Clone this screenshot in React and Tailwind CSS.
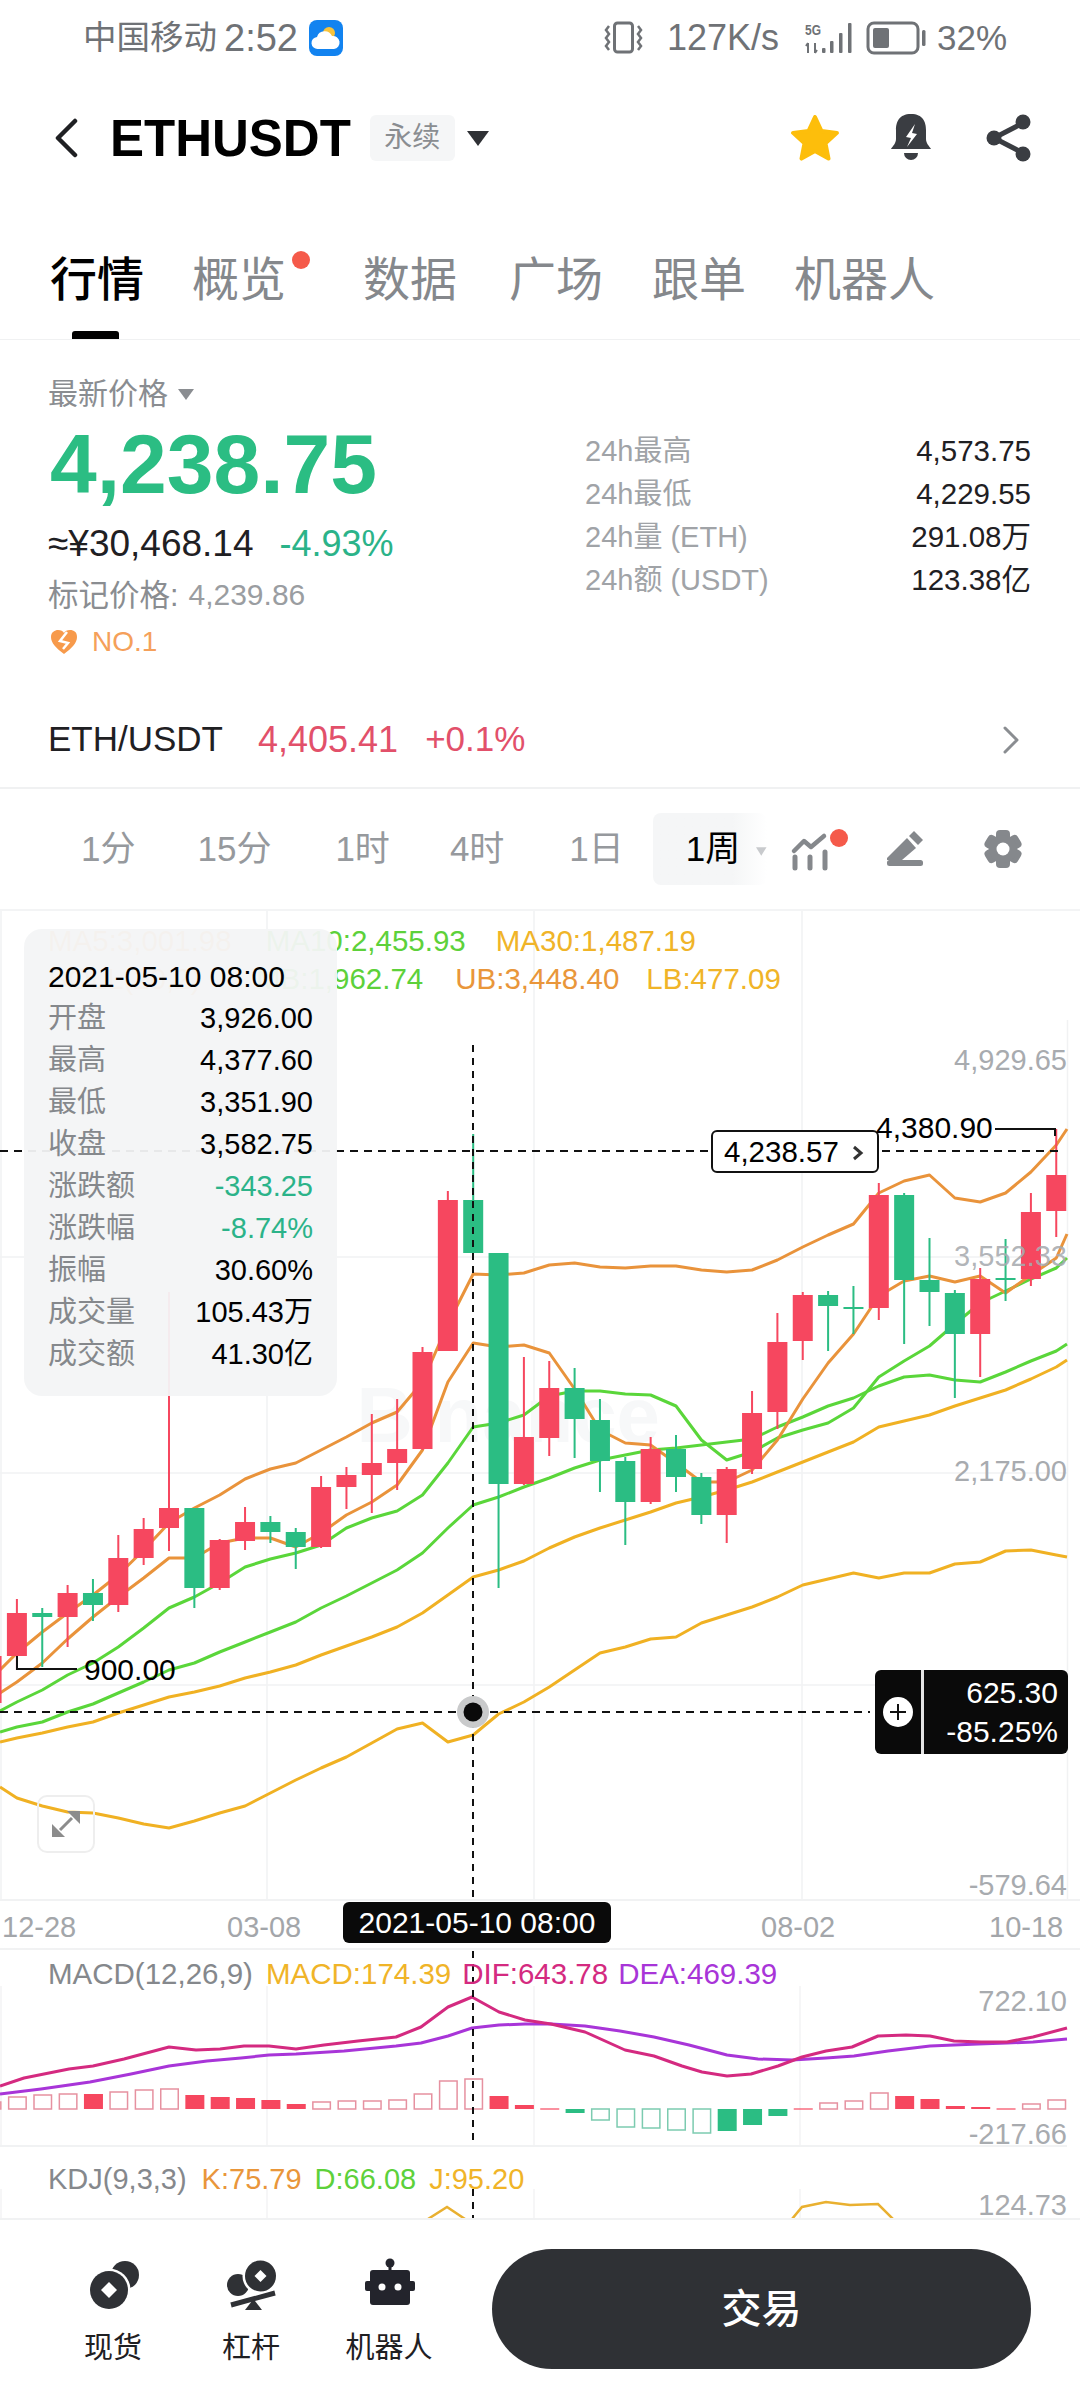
import React from 'react';

const RED = '#f6475f';
const GREEN = '#2bbd83';

// candle: [slot, colour, wick top, body top, body bottom, wick bottom]
const candles = [
  [-1, 'r', 1656, 1656, 1703, 1703],
  [0, 'r', 1599, 1613, 1656, 1670],
  [1, 'g', 1608, 1613, 1617, 1667],
  [2, 'r', 1585, 1593, 1617, 1647],
  [3, 'g', 1579, 1593, 1605, 1621],
  [4, 'r', 1535, 1558, 1605, 1612],
  [5, 'r', 1518, 1529, 1558, 1565],
  [6, 'r', 1292, 1508, 1528, 1551],
  [7, 'g', 1508, 1508, 1588, 1608],
  [8, 'r', 1539, 1540, 1588, 1590],
  [9, 'r', 1507, 1522, 1541, 1550],
  [10, 'g', 1516, 1522, 1532, 1543],
  [11, 'g', 1528, 1532, 1547, 1569],
  [12, 'r', 1476, 1487, 1547, 1548],
  [13, 'r', 1467, 1475, 1487, 1509],
  [14, 'r', 1414, 1463, 1475, 1513],
  [15, 'r', 1399, 1449, 1463, 1490],
  [16, 'r', 1347, 1352, 1449, 1450],
  [17, 'r', 1191, 1200, 1351, 1351],
  [18, 'g', 1134, 1200, 1253, 1253],
  [19, 'g', 1253, 1253, 1484, 1588],
  [20, 'r', 1357, 1437, 1484, 1485],
  [21, 'r', 1361, 1388, 1438, 1456],
  [22, 'g', 1368, 1388, 1419, 1458],
  [23, 'g', 1399, 1420, 1461, 1492],
  [24, 'g', 1457, 1461, 1502, 1545],
  [25, 'r', 1437, 1449, 1502, 1504],
  [26, 'g', 1435, 1449, 1477, 1492],
  [27, 'g', 1473, 1477, 1515, 1524],
  [28, 'r', 1467, 1469, 1515, 1543],
  [29, 'r', 1391, 1413, 1469, 1474],
  [30, 'r', 1313, 1342, 1412, 1429],
  [31, 'r', 1292, 1295, 1341, 1360],
  [32, 'g', 1291, 1295, 1306, 1351],
  [33, 'g', 1286, 1307, 1309, 1334],
  [34, 'r', 1183, 1195, 1308, 1320],
  [35, 'g', 1193, 1195, 1280, 1344],
  [36, 'g', 1238, 1280, 1292, 1326],
  [37, 'g', 1290, 1293, 1334, 1398],
  [38, 'r', 1268, 1279, 1334, 1377],
  [39, 'g', 1239, 1278, 1280, 1301],
  [40, 'r', 1193, 1212, 1279, 1286],
  [41, 'r', 1129, 1175, 1211, 1237],
];

// y per slot, with one extra value at each chart edge
const overlays = [
  { color: '#f0b123', ys: [1787,1798,1806,1812,1813,1818,1824,1828,1821,1813,1806,1793,1780,1768,1757,1743,1729,1723,1742,1735,1714,1702,1687,1670,1653,1647,1639,1637,1623,1615,1607,1597,1585,1579,1573,1578,1573,1573,1564,1562,1551,1550,1555,1557] },
  { color: '#f0b123', ys: [1742,1738,1733,1727,1722,1713,1705,1697,1692,1686,1678,1672,1665,1655,1646,1637,1627,1613,1595,1577,1570,1561,1548,1537,1528,1520,1512,1503,1497,1490,1482,1472,1462,1452,1442,1427,1421,1415,1406,1398,1390,1379,1367,1360] },
  { color: '#5ad63a', ys: [1732,1727,1722,1712,1704,1693,1682,1670,1663,1652,1642,1632,1622,1608,1596,1583,1570,1553,1528,1505,1497,1487,1478,1468,1460,1455,1450,1448,1445,1442,1439,1427,1417,1406,1398,1386,1377,1375,1380,1382,1372,1361,1351,1344] },
  { color: '#5ad63a', ys: [1711,1702,1690,1675,1663,1647,1628,1608,1597,1583,1567,1559,1553,1545,1528,1518,1511,1495,1463,1427,1423,1415,1396,1391,1391,1394,1395,1406,1440,1460,1452,1438,1430,1423,1408,1377,1361,1346,1324,1303,1291,1279,1268,1258] },
  { color: '#e9933b', ys: [1693,1682,1663,1639,1617,1597,1578,1558,1558,1543,1538,1538,1547,1533,1515,1502,1485,1450,1382,1343,1347,1345,1353,1389,1430,1443,1445,1463,1482,1482,1470,1440,1399,1363,1334,1296,1281,1276,1282,1276,1293,1275,1258,1234] },
  { color: '#e9933b', ys: [1670,1653,1632,1613,1595,1575,1550,1523,1508,1495,1479,1469,1463,1450,1437,1423,1412,1382,1324,1274,1275,1273,1265,1263,1267,1268,1266,1266,1270,1272,1270,1260,1247,1235,1224,1193,1181,1175,1198,1202,1193,1172,1145,1129] },
];

const slotX = (slot) => 16.9 + 25.35 * slot;

const overlayPoints = (ys) =>
  ys
    .map((y, n) => {
      const x = n === 0 ? 0 : n === ys.length - 1 ? 1067 : slotX(n - 1);
      return `${x.toFixed(1)},${y}`;
    })
    .join(' ');

const difLine = '0,2087 24,2079 69,2070 93,2067 124,2060 169,2048 196,2051 220,2050 244,2047 269,2047 296,2050 324,2046 358,2042 396,2038 421,2028 448,2008 472,1998 499,2013 525,2021 551,2025 585,2033 625,2051 654,2057 682,2067 702,2073 727,2077 751,2075 778,2067 802,2058 826,2052 852,2048 878,2037 906,2036 930,2037 954,2042 981,2043 1007,2043 1033,2038 1067,2029';
const deaLine = '0,2095 41,2090 90,2083 131,2075 169,2067 207,2062 241,2059 269,2056 296,2055 344,2052 396,2047 421,2044 448,2037 472,2029 499,2026 525,2025 551,2025 585,2027 620,2032 654,2038 689,2046 727,2056 758,2060 792,2061 826,2059 854,2057 888,2052 930,2047 978,2045 1007,2044 1033,2043 1067,2040';

// histogram: [slot, height above the zero line, solid]
const histogram = [
  [-1,7,0],[0,12,0],[1,14,0],[2,15,0],[3,15,1],[4,17,0],[5,19,0],[6,20,0],[7,14,1],[8,12,1],[9,11,1],[10,9,1],[11,5,1],
  [12,7,0],[13,8,0],[14,8,0],[15,9,0],[16,15,0],[17,28,0],[18,30,0],[19,13,1],[20,4,1],[21,1,0],[22,-4,1],[23,-11,0],
  [24,-18,0],[25,-19,0],[26,-21,0],[27,-24,0],[28,-22,1],[29,-16,1],[30,-7,1],[31,1,0],[32,6,0],[33,8,0],[34,16,0],
  [35,13,1],[36,10,1],[37,3,1],[38,2,1],[39,1,0],[40,5,0],[41,9,0],
];

const tabs = [
  { label: '行情', cls: 'ml-[50px] text-black font-medium' },
  { label: '概览', cls: 'ml-[48px] text-[#85888c]' },
  { label: '数据', cls: 'ml-[77px] text-[#85888c]' },
  { label: '广场', cls: 'ml-[52px] text-[#85888c]' },
  { label: '跟单', cls: 'ml-[49px] text-[#85888c]' },
  { label: '机器人', cls: 'ml-[48px] text-[#85888c]' },
];

const intervals = [
  { label: '1分', cls: 'ml-[81px]' },
  { label: '15分', cls: 'ml-[62px]' },
  { label: '1时', cls: 'ml-[64px]' },
  { label: '4时', cls: 'ml-[60px]' },
  { label: '1日', cls: 'ml-[65px]' },
];

const stats = [
  ['24h最高', '4,573.75'],
  ['24h最低', '4,229.55'],
  ['24h量 (ETH)', '291.08万'],
  ['24h额 (USDT)', '123.38亿'],
];

const readout = [
  ['开盘', '3,926.00', 'text-black'],
  ['最高', '4,377.60', 'text-black'],
  ['最低', '3,351.90', 'text-black'],
  ['收盘', '3,582.75', 'text-black'],
  ['涨跌额', '-343.25', 'text-[#2bb389]'],
  ['涨跌幅', '-8.74%', 'text-[#2bb389]'],
  ['振幅', '30.60%', 'text-black'],
  ['成交量', '105.43万', 'text-black'],
  ['成交额', '41.30亿', 'text-black'],
];

function StatusBar() {
  return (
    <div className="flex h-[75px] items-center text-[#6f7276]">
      <span className="ml-[83px] text-[33.5px] leading-none">中国移动</span>
      <span className="ml-[7px] text-[38px] leading-none">2:52</span>
      <svg viewBox="0 0 34 36" className="ml-[11px] h-[36px] w-[34px]">
        <rect width="34" height="36" rx="8" fill="#1283f0" />
        <circle cx="20" cy="13" r="6" fill="#f8c33c" />
        <path d="M9 29 a6 6 0 0 1 -1 -12 a8 8 0 0 1 15 -1 a6.5 6.5 0 0 1 2 13 z" fill="#fff" />
      </svg>
      <svg viewBox="0 0 40 34" className="ml-[261px] h-[34px] w-[40px]" fill="none" stroke="#6f7276" strokeWidth="3">
        <rect x="10.5" y="2" width="18" height="29" rx="3" />
        <path d="M5 5 l-3 4 l3 4 l-3 4 l3 4 l-3 4 l3 4" strokeWidth="2.5" />
        <path d="M34 5 l3 4 l-3 4 l3 4 l-3 4 l3 4 l-3 4" strokeWidth="2.5" />
      </svg>
      <span className="ml-[23px] text-[36px] leading-none">127K/s</span>
      <svg viewBox="0 0 52 32" className="ml-[26px] h-[32px] w-[52px]" fill="#6f7276">
        <text x="0" y="13" fontSize="15" fontWeight="700" textLength="16" lengthAdjust="spacingAndGlyphs">5G</text>
        <path d="M3 21 v10 M3 21 l-2 3 M10 31 v-10 M10 31 l2 -3" stroke="#6f7276" strokeWidth="2" fill="none" />
        <rect x="17" y="26" width="3.5" height="5" rx="1" />
        <rect x="25" y="19" width="3.5" height="12" rx="1" />
        <rect x="34" y="11" width="3.5" height="20" rx="1" />
        <rect x="43" y="1" width="3.5" height="30" rx="1" />
      </svg>
      <svg viewBox="0 0 60 34" className="ml-[9px] h-[34px] w-[60px]" fill="none">
        <rect x="2" y="2" width="50" height="30" rx="6" stroke="#6f7276" strokeWidth="3" />
        <rect x="7" y="7" width="16" height="20" rx="2" fill="#6f7276" />
        <rect x="56" y="9" width="3.5" height="16" rx="1.5" fill="#6f7276" />
      </svg>
      <span className="ml-[11px] text-[35px] leading-none">32%</span>
    </div>
  );
}

function Header() {
  return (
    <div className="flex h-[126px] items-center">
      <svg viewBox="0 0 24 40" className="ml-[54px] h-[40px] w-[24px]" fill="none" stroke="#1f2023" strokeWidth="4.5" strokeLinecap="round" strokeLinejoin="round">
        <path d="M21 3 L4 20 L21 37" />
      </svg>
      <span className="ml-[32px] text-[51px] font-bold leading-none text-black">ETHUSDT</span>
      <span className="ml-[19px] flex h-[46px] w-[85px] items-center justify-center rounded-[6px] bg-[#f5f6f7] text-[28px] text-[#8a8d91]">永续</span>
      <svg viewBox="0 0 22 15" className="ml-[12px] h-[15px] w-[22px]">
        <path d="M0 0 H22 L11 15 Z" fill="#2f3135" />
      </svg>
      <svg viewBox="-25 -25 50 47" className="ml-[301px] h-[47px] w-[50px]">
        <polygon points="0,-23 6.5,-8.9 21.9,-7.1 10.5,3.4 13.5,18.6 0,11 -13.5,18.6 -10.5,3.4 -21.9,-7.1 -6.5,-8.9" fill="#fdbe0b" stroke="#fdbe0b" strokeWidth="4" strokeLinejoin="round" />
      </svg>
      <svg viewBox="0 0 44 50" className="ml-[49px] h-[50px] w-[44px]">
        <path d="M22 1 C10 1 7 9 7 17 L7 26 C7 30 4 33 2 36 L42 36 C40 33 37 30 37 26 L37 17 C37 9 34 1 22 1 Z" fill="#3a3d42" />
        <path d="M15 40 H29 A7 7 0 0 1 15 40 Z" fill="#3a3d42" />
        <polygon points="26,11 17,24 22,25 18,34 28,21 23,20" fill="#fff" />
      </svg>
      <svg viewBox="0 0 46 48" className="ml-[53px] h-[48px] w-[46px]" fill="#3a3d42" stroke="#3a3d42">
        <path d="M37 9 L8 24 L37 39" fill="none" strokeWidth="5" />
        <circle cx="37" cy="8" r="7.5" strokeWidth="0" />
        <circle cx="8" cy="24" r="7.5" strokeWidth="0" />
        <circle cx="37" cy="40" r="7.5" strokeWidth="0" />
      </svg>
    </div>
  );
}

function Tabs() {
  return (
    <div className="relative flex h-[139px] border-b border-[#f0f1f2] pt-[56px] text-[47px] leading-[46px]">
      {tabs.map((tab) => (
        <span key={tab.label} className={tab.cls}>{tab.label}</span>
      ))}
      <span className="absolute left-[292px] top-[50px] h-[18px] w-[18px] rounded-full bg-[#f55a4a]" />
      <span className="absolute bottom-0 left-[72px] h-[8px] w-[47px] rounded-t-[3px] bg-black" />
    </div>
  );
}

function PriceBlock() {
  return (
    <div className="flex h-[360px] justify-between">
      <div className="ml-[48px] flex flex-col pt-[36px]">
        <div className="flex items-center text-[30px] leading-[36px] text-[#8a8d91]">
          最新价格
          <svg viewBox="0 0 16 11" className="ml-[10px] h-[11px] w-[16px]"><path d="M0 0 H16 L8 11 Z" fill="#8a8d91" /></svg>
        </div>
        <div className="ml-[2px] mt-[10px] text-[84px] font-bold leading-[84px] text-[#2bbd83]">4,238.75</div>
        <div className="mt-[18px] flex items-center leading-[40px]">
          <span className="text-[37px] text-[#1f2023]">≈¥30,468.14</span>
          <span className="ml-[26px] text-[36px] text-[#2bb389]">-4.93%</span>
        </div>
        <div className="mt-[13px] flex items-center leading-[36px] text-[#9a9da1]">
          <span className="text-[30.5px] text-[#8a8d91]">标记价格:</span>
          <span className="ml-[10px] text-[30px]">4,239.86</span>
        </div>
        <div className="mt-[13px] flex items-center text-[28px] leading-[32px] text-[#f5a05a]">
          <svg viewBox="0 0 28 26" className="ml-[2px] h-[26px] w-[28px]">
            <path d="M14 25 C6 19 1 14 1 8 C1 3 5 1 8 1 C11 1 13 2 14 4 C15 2 17 1 20 1 C24 1 27 3 27 8 C27 14 22 19 14 25 Z" fill="#f79a4b" />
            <path d="M17 3 L10 12 L18 14 L13 20" fill="none" stroke="#fff" strokeWidth="2.5" />
          </svg>
          <span className="ml-[14px]">NO.1</span>
        </div>
      </div>
      <div className="mr-[49px] mt-[90px] flex h-fit w-[446px] flex-col">
        {stats.map(([label, value]) => (
          <div key={label} className="flex h-[43px] items-center justify-between text-[29.5px]">
            <span className="text-[29px] text-[#a0a3a7]">{label}</span>
            <span className="text-[#1f2023]">{value}</span>
          </div>
        ))}
      </div>
    </div>
  );
}

function PairRow() {
  return (
    <div className="flex h-[89px] items-center border-b-2 border-[#f0f1f2] pb-[8px] text-[35px]">
      <span className="ml-[48px] text-[#1f2023]">ETH/USDT</span>
      <span className="ml-[35px] text-[36px] text-[#e2506a]">4,405.41</span>
      <span className="ml-[27px] text-[#e2506a]">+0.1%</span>
      <svg viewBox="0 0 18 28" className="ml-auto mr-[60px] h-[28px] w-[18px]" fill="none" stroke="#8a8d91" strokeWidth="3" strokeLinecap="round" strokeLinejoin="round">
        <path d="M3 2 L15 14 L3 26" />
      </svg>
    </div>
  );
}

function IntervalBar() {
  return (
    <div className="flex h-[122px] items-center border-b-2 border-[#f3f4f5]">
      <div className="flex text-[35px] text-[#96999d]">
        {intervals.map((item) => (
          <span key={item.label} className={item.cls}>{item.label}</span>
        ))}
      </div>
      <div className="ml-[29px] flex h-[72px] w-[114px] shrink-0 items-center whitespace-nowrap rounded-[8px] bg-gradient-to-r from-[#f5f6f7] from-70% to-white pl-[33px] text-[35px] text-black">
        1周
        <svg viewBox="0 0 14 11" className="ml-[16px] mt-[4px] h-[11px] w-[14px]"><path d="M0 0 H14 L7 11 Z" fill="#c8cacd" /></svg>
      </div>
      <svg viewBox="780 822 70 50" className="ml-[12px] h-[50px] w-[70px]" fill="none">
        <path d="M795 849 L805 839 L812 845 L825 834" stroke="#85888c" strokeWidth="4.5" strokeLinecap="round" strokeLinejoin="round" />
        <path d="M796 855 V866 M811 855 V866 M826 850 V866" stroke="#85888c" strokeWidth="5" strokeLinecap="round" />
        <circle cx="840" cy="836" r="9" fill="#f55a4a" />
      </svg>
      <svg viewBox="886 830 40 40" className="ml-[36px] h-[40px] w-[40px]" fill="#85888c">
        <path d="M888 859 L908 839 L917 849 L903 861 H888 Z" />
        <rect x="888" y="861" width="36" height="6" rx="2.5" />
        <path d="M910 837 L915 832 L924 841 L919 846 Z" />
      </svg>
      <svg viewBox="-20 -20 40 40" className="ml-[58px] h-[40px] w-[40px]" fill="#85888c">
        <rect x="-7" y="-19" width="14" height="38" rx="4" />
        <rect x="-7" y="-19" width="14" height="38" rx="4" transform="rotate(60)" />
        <rect x="-7" y="-19" width="14" height="38" rx="4" transform="rotate(120)" />
        <circle r="14" />
        <circle r="6.5" fill="#fff" />
      </svg>
    </div>
  );
}

function CandleChart() {
  return (
    <svg viewBox="0 911 1080 988" className="absolute inset-0 h-[988px] w-[1080px]">
      <g stroke="#f1f2f3" strokeWidth="1.5">
        <path d="M1 911 V1899 M267 911 V1899 M534 911 V1899 M802 911 V1899 M1067.5 1020 V1899" />
        <path d="M0 1257 H1067 M0 1473 H1067 M0 1685 H1067" />
      </g>
      <text x="660" y="1442" textAnchor="end" fontSize="78" fontWeight="700" fill="#f7f8f9">Binance</text>
      {overlays.map((line, n) => (
        <polyline key={n} points={overlayPoints(line.ys)} fill="none" stroke={line.color} strokeWidth="3" strokeLinejoin="round" />
      ))}
      {candles.map(([slot, kind, wickTop, top, bottom, wickBottom]) => {
        const x = slotX(slot);
        const color = kind === 'r' ? RED : GREEN;
        return (
          <g key={slot}>
            <rect x={x - 1} y={wickTop} width="2" height={wickBottom - wickTop} fill={color} />
            <rect x={x - 10} y={top} width="20" height={bottom - top} fill={color} />
          </g>
        );
      })}
      <path d="M0 1151 H1063" stroke="#111" strokeWidth="2" strokeDasharray="8 6" />
      <path d="M0 1712 H870" stroke="#111" strokeWidth="2" strokeDasharray="8 6" />
      <path d="M473 1045 V1899" stroke="#111" strokeWidth="2" strokeDasharray="7 6" />
      <path d="M995 1129 H1055 V1136" fill="none" stroke="#111" strokeWidth="2" />
      <path d="M17 1656 V1669 H77" fill="none" stroke="#111" strokeWidth="2" />
      <circle cx="473" cy="1712" r="16" fill="#c9cacb" />
      <circle cx="473" cy="1712" r="9.5" fill="#0a0a0a" />
    </svg>
  );
}

function ChartPanel() {
  return (
    <div className="relative h-[988px] text-[29px]">
      <CandleChart />

      <div className="relative flex flex-col pl-[48px] pt-[11px] text-[29.5px] leading-[38px]">
        <div className="flex">
          <span className="text-[#f0b46a]">MA5:3,001.98</span>
          <span className="ml-[34px] text-[#5dd13a]">MA10:2,455.93</span>
          <span className="ml-[30px] text-[#f0b428]">MA30:1,487.19</span>
        </div>
        <div className="flex">
          <span className="w-[208px] text-[#f0b46a]">BOLL(20,2)</span>
          <span className="text-[#5dd13a]">MB:1,962.74</span>
          <span className="ml-[32px] text-[#e9963a]">UB:3,448.40</span>
          <span className="ml-[27px] text-[#f0b428]">LB:477.09</span>
        </div>
      </div>

      <div className="absolute left-[24px] top-[18px] flex h-[467px] w-[313px] flex-col rounded-[18px] bg-[#f3f4f6]/95 pl-[24px] pr-[24px] pt-[27px]">
        <div className="whitespace-nowrap text-[30px] leading-[42px] text-black">2021-05-10 08:00</div>
        {readout.map(([label, value, tone]) => (
          <div key={label} className="flex h-[42px] items-center justify-between text-[29px]">
            <span className="text-[#85888c]">{label}</span>
            <span className={tone}>{value}</span>
          </div>
        ))}
      </div>

      <span className="absolute right-[13px] top-[149px] -translate-y-1/2 leading-none text-[#a8abaf]">4,929.65</span>
      <span className="absolute right-[13px] top-[345px] -translate-y-1/2 leading-none text-[#a8abaf]/90">3,552.33</span>
      <span className="absolute right-[13px] top-[560px] -translate-y-1/2 leading-none text-[#a8abaf]">2,175.00</span>
      <span className="absolute right-[13px] top-[974px] -translate-y-1/2 leading-none text-[#a8abaf]">-579.64</span>

      <div className="absolute left-[711px] top-[219px] flex h-[43px] w-[168px] items-center rounded-[6px] border-2 border-[#111] bg-white pl-[11px] pt-[2px] text-[29.5px] text-black">
        4,238.57
        <svg viewBox="0 0 12 16" className="ml-[13px] h-[16px] w-[12px]" fill="none" stroke="#333" strokeWidth="3"><path d="M2 2 L9 8 L2 14" /></svg>
      </div>
      <span className="absolute left-[876px] top-[202px] text-[30px] leading-none text-black">4,380.90</span>
      <span className="absolute left-[84px] top-[759px] -translate-y-1/2 text-[30px] leading-none text-black">900.00</span>

      <div className="absolute left-[875px] top-[759px] flex h-[84px] w-[193px] rounded-[6px] bg-[#0a0a0a] text-white">
        <div className="flex w-[49px] items-center justify-center border-r-[3px] border-[#e5e5e5]">
          <span className="flex h-[30px] w-[30px] items-center justify-center rounded-full bg-white">
            <svg viewBox="0 0 16 16" className="h-[16px] w-[16px]" stroke="#111" strokeWidth="2"><path d="M8 0 V16 M0 8 H16" /></svg>
          </span>
        </div>
        <div className="flex flex-1 flex-col items-end justify-center pr-[10px] text-[30px] leading-[39px]">
          <span>625.30</span>
          <span>-85.25%</span>
        </div>
      </div>

      <div className="absolute left-[37px] top-[884px] flex h-[58px] w-[58px] items-center justify-center rounded-[10px] border-2 border-[#eeeeee]">
        <svg viewBox="0 0 30 28" className="h-[28px] w-[30px]" fill="#8c8c8c">
          <path d="M16 1 H29 V14 Z" />
          <path d="M1 27 V14 L14 27 Z" />
          <path d="M21 8 L9 20" stroke="#8c8c8c" strokeWidth="3" />
        </svg>
      </div>
    </div>
  );
}

function TimeAxis() {
  return (
    <div className="relative h-[51px] border-y-2 border-[#f1f2f3] text-[29px] text-[#a3a6aa]">
      <span className="absolute left-[2px] top-[8px] leading-[36px]">12-28</span>
      <span className="absolute left-[227px] top-[8px] leading-[36px]">03-08</span>
      <span className="absolute left-[761px] top-[8px] leading-[36px]">08-02</span>
      <span className="absolute left-[989px] top-[8px] leading-[36px]">10-18</span>
      <span className="absolute left-[343px] top-[1px] flex h-[41px] w-[268px] items-center justify-center rounded-[6px] bg-[#0a0a0a] text-[30px] text-white">
        2021-05-10 08:00
      </span>
    </div>
  );
}

function MacdPanel() {
  return (
    <div className="relative h-[197px]">
      <svg viewBox="0 1951 1080 197" className="absolute inset-0 h-[197px] w-[1080px]" fill="none">
        <path d="M1 1987 V2146 M267 1987 V2146 M534 1987 V2146 M800 1987 V2146" stroke="#f3f4f5" strokeWidth="1.5" />
        <path d="M0 2147 H1067" stroke="#f1f2f3" strokeWidth="2" />
        {histogram.map(([slot, height, solid]) => {
          const x = slotX(slot) - 9;
          const y = height > 0 ? 2110 - height : 2110;
          const h = Math.abs(height);
          const color = height > 0 ? RED : GREEN;
          if (solid) return <rect key={slot} x={x} y={y} width="19" height={h} fill={color} />;
          if (h === 1) return <rect key={slot} x={x} y={y} width="19" height="2" fill={color} opacity="0.6" />;
          return <rect key={slot} x={x + 0.75} y={y} width="17.5" height={h} fill="#fff" stroke={height > 0 ? '#e691a0' : '#7ccbb0'} strokeWidth="1.5" />;
        })}
        <polyline points={deaLine} stroke="#a835d8" strokeWidth="3" strokeLinejoin="round" />
        <polyline points={difLine} stroke="#d42a80" strokeWidth="3" strokeLinejoin="round" />
        <path d="M473 1952 V2146" stroke="#111" strokeWidth="2" strokeDasharray="7 6" />
      </svg>
      <div className="relative flex pl-[48px] pt-[6px] text-[29.5px] leading-[36px]">
        <span className="text-[#85888c]">MACD(12,26,9)</span>
        <span className="ml-[13px] text-[#f0b428]">MACD:174.39</span>
        <span className="ml-[11px] text-[#d42a80]">DIF:643.78</span>
        <span className="ml-[10px] text-[#a835d8]">DEA:469.39</span>
      </div>
      <span className="absolute right-[13px] top-[51px] -translate-y-1/2 text-[29px] leading-none text-[#a8abaf]">722.10</span>
      <span className="absolute right-[13px] top-[184px] -translate-y-1/2 text-[29px] leading-none text-[#a8abaf]">-217.66</span>
    </div>
  );
}

function KdjPanel() {
  return (
    <div className="relative h-[73px] border-b-2 border-[#f1f2f3]">
      <svg viewBox="0 2148 1080 71" className="absolute inset-0 h-[71px] w-[1080px]" fill="none">
        <path d="M1 2190 V2220 M267 2190 V2220 M534 2190 V2220 M800 2190 V2220" stroke="#f3f4f5" strokeWidth="1.5" />
        <path d="M428 2220 L447 2208 L465 2220" stroke="#e9b030" strokeWidth="2.5" />
        <path d="M792 2220 L802 2208 L826 2203 L850 2206 L878 2205 L893 2220" stroke="#e9b030" strokeWidth="2.5" />
        <path d="M473 2190 V2220" stroke="#111" strokeWidth="2" strokeDasharray="7 6" />
      </svg>
      <div className="relative flex pl-[48px] pt-[14px] text-[29px] leading-[36px]">
        <span className="text-[#85888c]">KDJ(9,3,3)</span>
        <span className="ml-[15px] text-[#e9963a]">K:75.79</span>
        <span className="ml-[13px] text-[#5dd13a]">D:66.08</span>
        <span className="ml-[13px] text-[#f0b428]">J:95.20</span>
      </div>
      <span className="absolute right-[13px] top-[58px] -translate-y-1/2 text-[29px] leading-none text-[#a8abaf]">124.73</span>
    </div>
  );
}

function BottomBar() {
  return (
    <div className="flex h-[179px] items-start bg-white pl-[44px]">
      <div className="mt-[38px] flex w-[138px] flex-col items-center">
        <svg viewBox="83 2260 60 52" className="h-[52px] w-[60px]" fill="#2f3135">
          <circle cx="125" cy="2277" r="14" />
          <circle cx="109" cy="2292" r="21.5" fill="#fff" />
          <circle cx="109" cy="2292" r="19" />
          <path d="M109 2284 L117 2292 L109 2300 L101 2292 Z" fill="#fff" />
        </svg>
        <span className="mt-[20px] text-[29px] leading-[36px] text-[#1f2023]">现货</span>
      </div>
      <div className="mt-[38px] flex w-[138px] flex-col items-center">
        <svg viewBox="221 2260 60 52" className="h-[52px] w-[60px]" fill="#2f3135">
          <circle cx="238" cy="2287" r="11" />
          <circle cx="260.5" cy="2278" r="18" fill="#fff" />
          <circle cx="260.5" cy="2278" r="15.5" />
          <path d="M260.5 2272 L266.5 2278 L260.5 2284 L254.5 2278 Z" fill="#fff" />
          <path d="M231 2307 L275 2295" stroke="#2f3135" strokeWidth="5" />
          <path d="M245 2312 H262 L253.5 2301 Z" />
        </svg>
        <span className="mt-[20px] text-[29px] leading-[36px] text-[#1f2023]">杠杆</span>
      </div>
      <div className="mt-[38px] flex w-[138px] flex-col items-center">
        <svg viewBox="359 2260 60 52" className="h-[52px] w-[60px]" fill="#23242c">
          <circle cx="390" cy="2265" r="4.5" />
          <rect x="388.5" y="2265" width="3" height="8" />
          <rect x="370" y="2272" width="40" height="35" rx="3" />
          <rect x="365" y="2283" width="50" height="10" rx="2" />
          <circle cx="382" cy="2289" r="3.5" fill="#fff" />
          <circle cx="398" cy="2289" r="3.5" fill="#fff" />
        </svg>
        <span className="mt-[20px] text-[29px] leading-[36px] text-[#1f2023]">机器人</span>
      </div>
      <button className="ml-[34px] mt-[29px] flex h-[120px] w-[539px] items-center justify-center rounded-full bg-[#2f3135] text-[40px] font-medium text-white">
        交易
      </button>
    </div>
  );
}

export default function App() {
  return (
    <div className="h-[2400px] w-[1080px] overflow-hidden bg-white font-['Liberation_Sans','Noto_Sans_CJK_SC',sans-serif]">
      <StatusBar />
      <Header />
      <Tabs />
      <PriceBlock />
      <PairRow />
      <IntervalBar />
      <ChartPanel />
      <TimeAxis />
      <MacdPanel />
      <KdjPanel />
      <BottomBar />
    </div>
  );
}
